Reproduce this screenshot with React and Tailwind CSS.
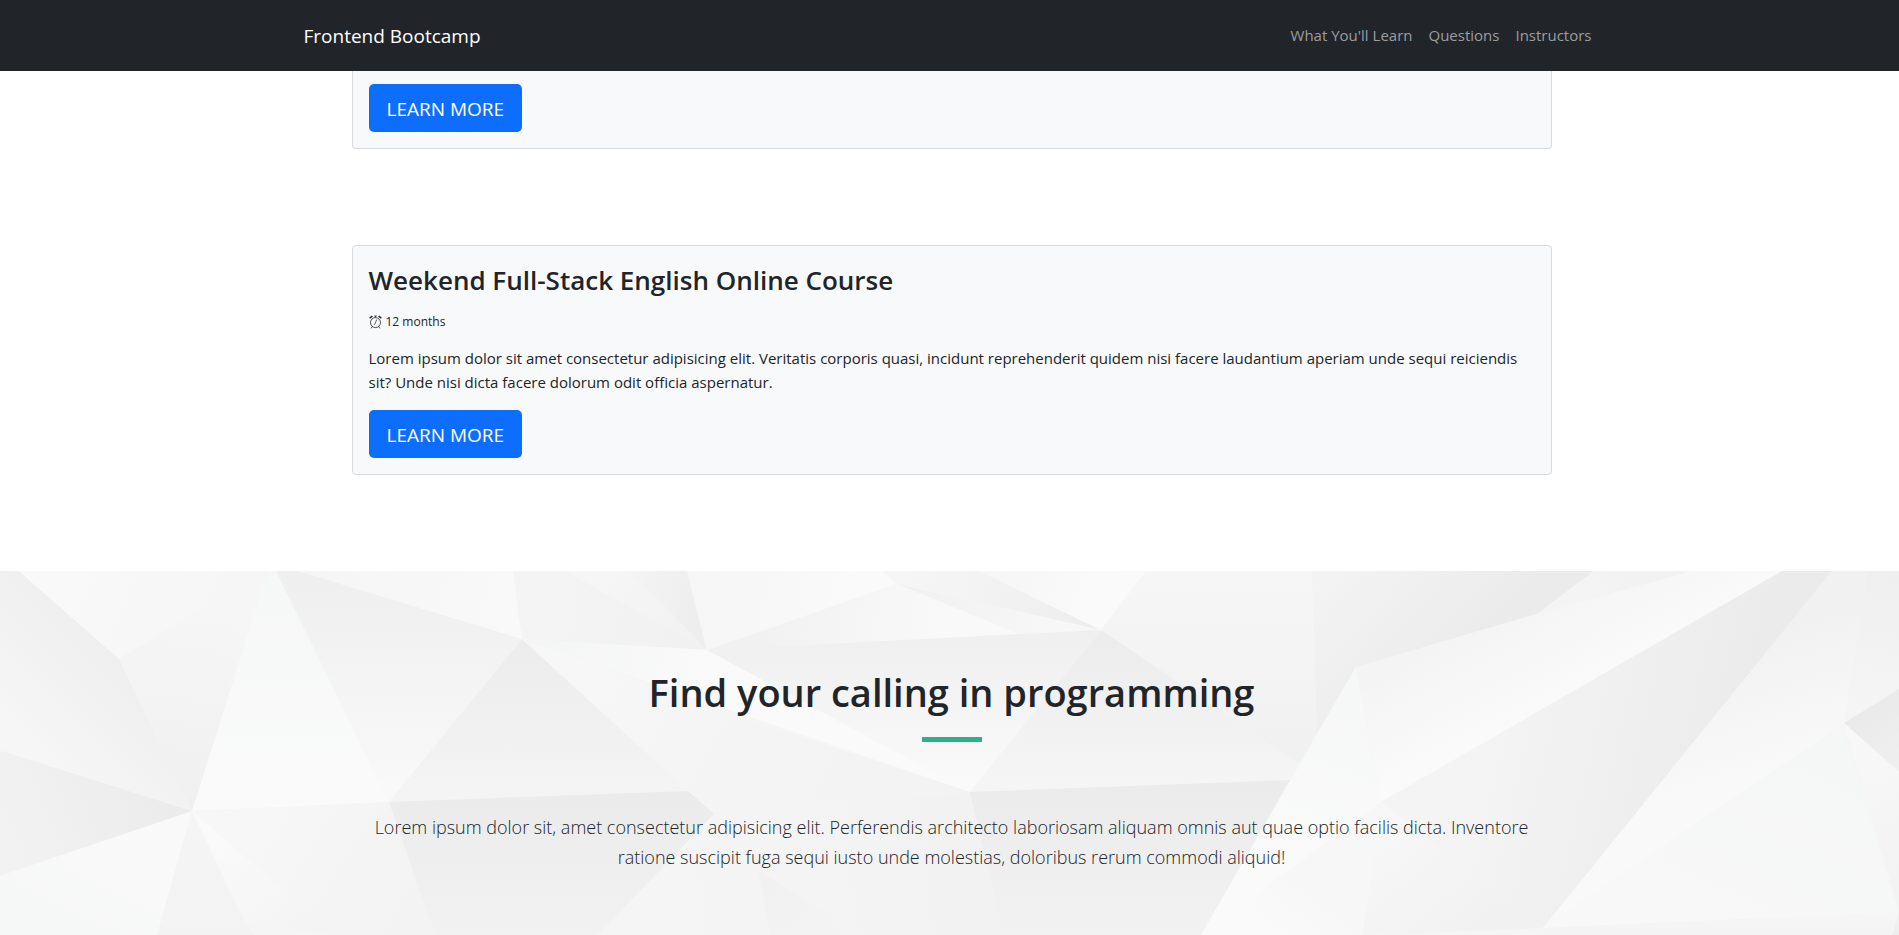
const facets = [
  // [points, x1, y1, from, x2, y2, to]
  ['0,0 1899,0 1899,364 0,364', 0, 0, '#f5f5f5', 0, 364, '#f5f5f5'],
  ['0,0 19,0 119,88 192,240 2,180 0,182', 100, 70, '#efefef', 10, 160, '#f6f6f6'],
  ['2,180 192,240 0,305 0,182', 180, 230, '#ebebeb', 20, 300, '#f2f2f2'],
  ['19,0 263,0 119,88', 60, 0, '#f9f9f9', 200, 60, '#f6f6f6'],
  ['263,0 276,0 192,240 119,88', 200, 30, '#f6f6f6', 170, 230, '#f0f0f0'],
  ['268,0 276,0 389,231 192,240', 270, 0, '#f6f7f7', 270, 240, '#fafafa'],
  ['276,0 298,0 522,68 389,231', 0, 10, '#efefef', 0, 220, '#f9f9f9'],
  ['298,0 513,0 522,68', 300, 0, '#f5f5f5', 520, 40, '#f9f9f9'],
  ['522,68 688,220 389,231', 0, 68, '#ececec', 0, 225, '#f4f4f4'],
  ['513,0 687,0 707,79 522,68', 520, 20, '#f4f4f4', 700, 40, '#f1f1f1'],
  ['565,0 630,0 707,79', 600, 0, '#f6f6f6', 700, 79, '#f1f1f1'],
  ['630,0 687,0 707,79', 630, 0, '#f4f4f4', 700, 10, '#eeeeee'],
  ['522,68 707,79 922,186 970,221', 540, 70, '#f4f5f5', 720, 110, '#fafafa'],
  ['522,68 748,149 970,221 714,243 688,220', 560, 80, '#f7f7f7', 820, 220, '#f3f3f3'],
  ['687,0 882,0 897,13 707,79', 690, 0, '#f6f6f6', 880, 20, '#fafafa'],
  ['882,0 979,0 1101,59 897,13', 900, 0, '#f6f6f6', 1080, 50, '#eeeeee'],
  ['707,79 897,13 1020,63', 760, 40, '#f1f1f1', 940, 70, '#f9f9f9'],
  ['897,13 1101,59 1020,63', 900, 10, '#f0f0f0', 1050, 60, '#f7f7f7'],
  ['979,0 1146,0 1101,59', 990, 0, '#f6f6f6', 1090, 50, '#fafafa'],
  ['707,79 1101,59 970,221', 0, 60, '#efefef', 0, 215, '#fafafa'],
  ['1146,0 1312,0 1317,162 1299,193 1101,59', 0, 0, '#f6f6f6', 0, 180, '#f1f1f1'],
  ['1101,59 1299,193 1290,209 970,221', 0, 59, '#ececec', 0, 215, '#f5f5f5'],
  ['192,240 389,231 435,364 335,364', 240, 240, '#f7f7f7', 400, 340, '#f3f3f3'],
  ['192,240 0,305 0,364 157,364', 100, 280, '#f9f9f9', 60, 364, '#f6f7f7'],
  ['192,240 157,364 255,364 245,351', 0, 240, '#f5f5f5', 0, 364, '#f3f3f3'],
  ['192,240 245,351 335,364', 220, 260, '#fafafa', 290, 364, '#f4f4f4'],
  ['389,231 688,220 714,243 598,364 435,364', 0, 225, '#ebebeb', 0, 364, '#f2f2f2'],
  ['714,243 970,221 1003,364 598,364', 660, 330, '#f5f5f5', 960, 300, '#f2f2f2'],
  ['758,299 826,342 850,364 770,364', 760, 300, '#f1f1f1', 820, 364, '#f3f3f3'],
  ['970,221 1290,209 1201,364 1003,364', 0, 212, '#ebebeb', 0, 364, '#f2f2f2'],
  ['1312,0 1594,0 1537,43 1356,96 1317,162', 1330, 0, '#f3f3f3', 1450, 110, '#ebebeb'],
  ['1594,0 1692,0 1537,43', 1620, 0, '#f2f2f2', 1600, 30, '#f4f4f4'],
  ['1356,96 1371,181 1381,231 1362,364 1201,364', 1350, 110, '#f6f7f7', 1290, 300, '#fafafa'],
  ['1356,96 1537,43 1692,0 1782,0 1381,231', 1480, 50, '#f4f4f4', 1530, 145, '#fafafa'],
  ['1381,231 1782,0 1832,0 1543,357', 1480, 150, '#f4f4f4', 1740, 210, '#ebebeb'],
  ['1381,231 1543,357 1362,364', 1390, 250, '#f7f7f7', 1480, 364, '#f1f1f1'],
  ['1201,364 1381,231 1372,300 1362,364', 1300, 300, '#f7f7f7', 1250, 364, '#fafafa'],
  ['1381,231 1493,317 1543,357', 1400, 240, '#f3f3f3', 1540, 340, '#f1f1f1'],
  ['1832,0 1868,0 1844,152 1543,357', 1760, 60, '#f1f1f1', 1800, 190, '#f9f9f9'],
  ['1868,0 1899,0 1899,118 1844,152', 1880, 0, '#efefef', 1860, 140, '#f5f5f5'],
  ['1844,152 1899,118 1899,201', 1860, 140, '#eaeaea', 1899, 190, '#efefef'],
  ['1844,152 1899,201 1899,341', 1850, 160, '#f8f8f8', 1899, 300, '#f3f3f3'],
  ['1844,152 1847,171 1899,341 1543,357', 1780, 180, '#f5f6f6', 1700, 350, '#f8f8f8'],
  ['1543,357 1899,341 1892,364 1546,364', 0, 340, '#f6f6f6', 0, 364, '#f4f4f4'],
  ['1899,341 1899,364 1892,364', 0, 341, '#f1f1f1', 0, 364, '#eeeeee'],
];

function FacetBackdrop() {
  return (
    <svg
      aria-hidden="true"
      className="absolute inset-0 h-full w-full"
      viewBox="0 0 1899 364"
      preserveAspectRatio="xMinYMin slice"
    >
      <defs>
        {facets.map(([, x1, y1, from, x2, y2, to], i) => (
          <linearGradient key={i} id={`facet-${i}`} gradientUnits="userSpaceOnUse" x1={x1} y1={y1} x2={x2} y2={y2}>
            <stop offset="0" stopColor={from} />
            <stop offset="1" stopColor={to} />
          </linearGradient>
        ))}
      </defs>
      {facets.map(([points], i) => (
        <polygon key={i} points={points} fill={`url(#facet-${i})`} />
      ))}
    </svg>
  );
}

function AlarmClock() {
  return (
    <svg aria-hidden="true" className="h-[14px] w-[13px]" viewBox="0 0 13 14" fill="none" stroke="currentColor">
      <circle cx="6.5" cy="7.6" r="5" strokeWidth="0.8" />
      <path d="M0.7 3.2 3.4 1.1M12.3 3.2 9.6 1.1" strokeWidth="1.5" />
      <path d="M5.2 1h2.6M6.5 1v1.6M3.2 11.5 2 13.4M9.8 11.5l1.2 1.9" strokeWidth="0.8" />
      <path d="M7.6 4.6 6.4 8 5.2 9.8" strokeWidth="0.7" />
    </svg>
  );
}

function LearnMore() {
  return (
    <button
      type="button"
      className="cursor-pointer self-start rounded-[5px] bg-[#0d6efd] px-[18px] pt-[11px] pb-[9px] text-[19px] leading-7 text-white"
    >
      LEARN MORE
    </button>
  );
}

const links = [
  ["What You'll Learn", '#learn'],
  ['Questions', '#questions'],
  ['Instructors', '#instructors'],
];

export default function App() {
  return (
    <div className="bg-white font-['Open_Sans','Noto_Sans',sans-serif] text-[15px] leading-6 text-[#212529]">
      <nav className="bg-[#212529] pl-1">
        <div className="mx-auto flex h-[71px] max-w-[1320px] items-center justify-between px-3">
          <a href="#top" className="text-[19px] text-white">
            Frontend Bootcamp
          </a>
          <ul className="flex pb-0.5">
            {links.map(([label, href]) => (
              <li key={href}>
                <a href={href} className="px-2 text-[#9b9d9e]">
                  {label}
                </a>
              </li>
            ))}
          </ul>
        </div>
      </nav>

      <main>
        <div className="flex flex-col gap-24 pb-24 pl-1">
          <article className="mx-auto flex w-full max-w-[1200px] flex-col rounded-b border border-t-0 border-[#d8dadc] bg-[#f8f9fa] px-4 pt-[13px] pb-4">
            <LearnMore />
          </article>

          <article className="mx-auto flex w-full max-w-[1200px] flex-col rounded border border-[#d8dadc] bg-[#f8f9fa] p-4">
            <h3 className="text-[26px] leading-9 font-semibold">Weekend Full-Stack English Online Course</h3>
            <p className="mt-3.5 flex items-center gap-1 text-xs leading-5">
              <AlarmClock />
              12 months
            </p>
            <p className="mt-3.5 mb-4">
              Lorem ipsum dolor sit amet consectetur adipisicing elit. Veritatis corporis quasi, incidunt
              reprehenderit quidem nisi facere laudantium aperiam unde sequi reiciendis sit? Unde nisi dicta
              facere dolorum odit officia aspernatur.
            </p>
            <LearnMore />
          </article>
        </div>

        <section className="relative pt-24 pb-[63px] pl-1 text-center">
          <FacetBackdrop />
          <div className="relative mx-auto max-w-[1200px]">
            <h2 className="text-[38px] leading-[50px] font-semibold">Find your calling in programming</h2>
            <div className="mx-auto mt-5 h-[5px] w-[60px] bg-[#26b28a]" />
            <p className="mt-[70px] text-[18px] leading-[30px] font-light">
              Lorem ipsum dolor sit, amet consectetur adipisicing elit. Perferendis architecto laboriosam aliquam
              omnis aut quae optio facilis dicta. Inventore ratione suscipit fuga sequi iusto unde molestias,
              doloribus rerum commodi aliquid!
            </p>
          </div>
        </section>
      </main>
    </div>
  );
}
